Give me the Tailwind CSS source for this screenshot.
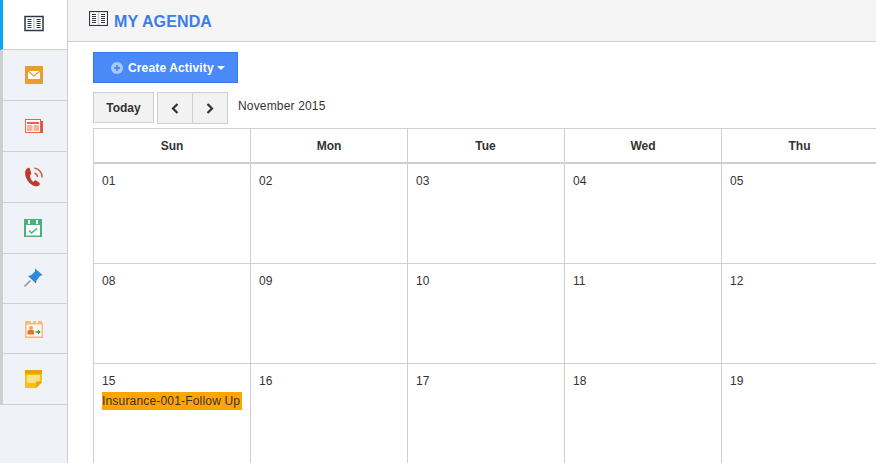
<!DOCTYPE html>
<html><head><meta charset="utf-8"><script src="https://cdn.jsdelivr.net/npm/@tailwindcss/browser@4"></script></head>
<body class="m-0 overflow-hidden bg-white">
<div class="flex w-[876px] h-[463px] overflow-hidden font-['Liberation_Sans',Arial,sans-serif] text-[#333]">
  <aside class="w-[68px] shrink-0 h-full bg-[#eff2f7] border-r border-[#cfcfcf] flex flex-col">
    <div class="h-[50px] bg-white border-l-[3px] border-[#0aa5f5] border-b border-b-[#d0d0d0] flex items-center justify-center pr-[3px] pb-[2px]">
      <svg width="20" height="17" viewBox="0 0 20 17"><rect x="1" y="1.5" width="18" height="14" fill="#fff" stroke="#2f3542" stroke-width="1.5"/><rect x="9" y="2" width="2" height="13" fill="#d5d5d5"/><path d="M3.500 4.500h4M3.500 6.500h4M3.500 8.500h4M3.500 10.500h4M3.500 12.500h4M12.500 4.500h4M12.500 6.500h4M12.500 8.500h4M12.500 10.500h4M12.500 12.500h4" stroke="#2f3542" stroke-width="1"/></svg>
    </div>
    <div class="h-[51px] border-l-[3px] border-l-[#cfcfcf] border-b border-b-[#d0d0d0] flex items-center justify-center pr-[3px]">
      <svg width="18" height="18" viewBox="0 0 18 18"><rect width="18" height="18" fill="#ee9b33"/><path d="M3 5h12v8H3z" fill="#fff"/><path d="M3 5l6 5 6-5" fill="none" stroke="#ee9b33" stroke-width="1.200"/></svg>
    </div>
    <div class="h-[51px] border-l-[3px] border-l-[#cfcfcf] border-b border-b-[#d0d0d0] flex items-center justify-center pr-[3px]">
      <svg width="18" height="14" viewBox="0 0 18 14"><rect x="15" y="2" width="3" height="12" fill="#d9583f"/><rect x=".5" y=".5" width="15" height="13" fill="#fff" stroke="#e9624a"/><rect x="2" y="3" width="12" height="2" fill="#e9624a"/><path d="M2 7h5.500M8.500 7h5.500M2 9h5.500M8.500 9h5.500M2 11h5.500M8.500 11h5.500" stroke="#e9624a" stroke-width="1"/></svg>
    </div>
    <div class="h-[51px] border-l-[3px] border-l-[#cfcfcf] border-b border-b-[#d0d0d0] flex items-center justify-center pr-[3px]">
      <svg width="18" height="20" viewBox="0 0 18 20"><path d="M3 1C.5 2-.5 5 .5 9c1 4 5 9 9 10 2 .500 4 .5 5-1 .5-1 .3-2-.5-2.500l-3-2c-.8-.4-1.500 0-2 .8-.7.800-1.500.5-2.500-1C5.500 11 4.500 9 5.300 8c.7-.5 1.200-1 .9-2L5 2C4.700 1 4 .6 3 1z" fill="#c0392b"/><path d="M9.500 6a4.500 4.500 0 0 1 3 4M9.500 1a9 9 0 0 1 7.500 9.500" fill="none" stroke="#c8604c" stroke-width="1.500"/></svg>
    </div>
    <div class="h-[51px] border-l-[3px] border-l-[#cfcfcf] border-b border-b-[#d0d0d0] flex items-center justify-center pr-[4px]">
      <svg width="18" height="18" viewBox="0 0 18 18"><rect width="18" height="18" fill="#47b27a"/><rect x="2" y="6" width="14" height="10.500" fill="#fff"/><rect x="4" y="1" width="2" height="4" fill="#fff"/><rect x="12" y="1" width="2" height="4" fill="#fff"/><path d="M5 11.500l2.500 2.500 5.500-4.500" fill="none" stroke="#47b27a" stroke-width="1.500"/></svg>
    </div>
    <div class="h-[50px] border-l-[3px] border-l-[#cfcfcf] border-b border-b-[#d0d0d0] flex items-center justify-center pr-[4px] pb-[2px]">
      <svg width="19" height="19" viewBox="0 0 19 19"><path d="M.5 18.500l6-6" stroke="#9a9a9a" stroke-width="1.600"/><path d="M11 .5l7.500 6.500-2.500 1-3.500 4.500-.5 3-8-7.500 3-.8 4-3.700z" fill="#2f8ad6"/></svg>
    </div>
    <div class="h-[50px] border-l-[3px] border-l-[#cfcfcf] border-b border-b-[#d0d0d0] flex items-center justify-center pr-[3px]">
      <svg width="18" height="18" viewBox="0 0 18 18"><path d="M0 1h6v2h2V1h3v2h2V1h4v2h1v15H0z" fill="#f5bd7c"/><rect x="1.500" y="4.500" width="15" height="12" fill="#fdf6ec"/><circle cx="6" cy="8" r="2" fill="#f4a94f"/><path d="M2.500 14.500v-3q0-1.500 1.500-1.500h4q1 0 1 1.500v3z" fill="#e5702a"/><path d="M10.500 12h3" stroke="#2e8b57" stroke-width="1.400"/><path d="M13 9.500l2.500 2.500-2.500 2.500z" fill="#2e8b57"/></svg>
    </div>
    <div class="h-[51px] border-l-[3px] border-l-[#cfcfcf] border-b border-b-[#d0d0d0] flex items-center justify-center pr-[4px]">
      <svg width="17" height="18" viewBox="0 0 17 18"><path d="M0 0h17v12l-6 6H0z" fill="#f5c211"/><rect width="17" height="4" fill="#f39c12"/><path d="M2 6h13M2 8h13M2 10h13M2 12h9" stroke="#fff" stroke-width="1"/><path d="M17 12h-6v6z" fill="#f39c12"/></svg>
    </div>
  </aside>
  <main class="flex-1 min-w-0">
    <header class="h-[42px] bg-[#f5f5f5] border-b border-[#cfcfcf] pl-[21px] pt-[11px] flex items-start gap-[6px]">
      <svg width="19" height="15" viewBox="0 0 19 15"><rect x=".5" y=".5" width="18" height="14" fill="#fff" stroke="#2f3542" stroke-width="1.200"/><rect x="8.500" y="1" width="2" height="13" fill="#d5d5d5"/><path d="M3 3.500h4M3 5.500h4M3 7.500h4M3 9.500h4M3 11.500h4M12 3.500h4M12 5.500h4M12 7.500h4M12 9.500h4M12 11.500h4" stroke="#2f3542" stroke-width="1"/></svg>
      <h1 class="text-[16px] leading-[20px] font-bold text-[#3b7ded] mt-[1px] tracking-[0.12px]">MY AGENDA</h1>
    </header>
    <div class="pl-[25px]">
      <button class="mt-[10px] w-[145px] h-[31px] bg-[#4a8af8] border border-[#3b78e7] text-white text-[12px] font-bold flex items-center pl-[17px] gap-[5px] tracking-[0.14px]">
        <svg width="12" height="12" viewBox="0 0 12 12"><circle cx="6" cy="6" r="6" fill="#a9c8fb"/><path d="M6 3v6M3 6h6" stroke="#4a8af8" stroke-width="1.800"/></svg>
        <span>Create Activity</span>
        <svg width="8" height="4" viewBox="0 0 8 4" class="-ml-[2px]"><path d="M0 0h8L4 4z" fill="#fff"/></svg>
      </button>
      <div class="flex mt-[9px] h-[32px] items-start">
        <button class="w-[61px] h-[31px] bg-[#f2f2f2] border border-[#cfcfcf] text-[12px] font-bold text-[#333]">Today</button>
        <div class="ml-[3px] flex w-[71px] h-[32px] border border-[#cfcfcf] bg-[#f2f2f2]">
          <div class="w-[35px] border-r border-[#cfcfcf] flex items-center justify-center">
            <svg width="8" height="11" viewBox="0 0 8 11"><path d="M6.500 1L2 5.500 6.500 10" fill="none" stroke="#333" stroke-width="2.200"/></svg>
          </div>
          <div class="flex-1 flex items-center justify-center">
            <svg width="8" height="11" viewBox="0 0 8 11"><path d="M1.500 1L6 5.500 1.500 10" fill="none" stroke="#333" stroke-width="2.200"/></svg>
          </div>
        </div>
        <div class="ml-[10px] text-[12px] leading-[14px] mt-[7px] tracking-[0.16px]">November 2015</div>
      </div>
      <div class="mt-[4px] w-[800px] border-l border-t border-[#cfcfcf] grid grid-cols-[157px_157px_157px_157px_157px_157px] grid-rows-[35px_100px_100px_100px] text-[12px]">
        <div class="border-r border-b-2 border-[#cfcfcf] flex items-center justify-center font-bold">Sun</div>
        <div class="border-r border-b-2 border-[#cfcfcf] flex items-center justify-center font-bold">Mon</div>
        <div class="border-r border-b-2 border-[#cfcfcf] flex items-center justify-center font-bold pr-[1px]">Tue</div>
        <div class="border-r border-b-2 border-[#cfcfcf] flex items-center justify-center font-bold">Wed</div>
        <div class="border-r border-b-2 border-[#cfcfcf] flex items-center justify-center font-bold pr-[1px]">Thu</div>
        <div class="border-r border-b-2 border-[#cfcfcf]"></div>
        <div class="border-r border-b border-[#cfcfcf] pl-[8px] pt-[10px] leading-[14px]">01</div>
        <div class="border-r border-b border-[#cfcfcf] pl-[8px] pt-[10px] leading-[14px]">02</div>
        <div class="border-r border-b border-[#cfcfcf] pl-[8px] pt-[10px] leading-[14px]">03</div>
        <div class="border-r border-b border-[#cfcfcf] pl-[8px] pt-[10px] leading-[14px]">04</div>
        <div class="border-r border-b border-[#cfcfcf] pl-[8px] pt-[10px] leading-[14px]">05</div>
        <div class="border-r border-b border-[#cfcfcf]"></div>
        <div class="border-r border-b border-[#cfcfcf] pl-[8px] pt-[10px] leading-[14px]">08</div>
        <div class="border-r border-b border-[#cfcfcf] pl-[8px] pt-[10px] leading-[14px]">09</div>
        <div class="border-r border-b border-[#cfcfcf] pl-[8px] pt-[10px] leading-[14px]">10</div>
        <div class="border-r border-b border-[#cfcfcf] pl-[8px] pt-[10px] leading-[14px]">11</div>
        <div class="border-r border-b border-[#cfcfcf] pl-[8px] pt-[10px] leading-[14px]">12</div>
        <div class="border-r border-b border-[#cfcfcf]"></div>
        <div class="border-r border-[#cfcfcf] pl-[8px] pt-[10px] leading-[14px]">15
          <div class="bg-[#ffa500] w-[140px] h-[18px] leading-[18px] mt-[4px] whitespace-nowrap tracking-[0.18px]">Insurance-001-Follow Up</div>
        </div>
        <div class="border-r border-[#cfcfcf] pl-[8px] pt-[10px] leading-[14px]">16</div>
        <div class="border-r border-[#cfcfcf] pl-[8px] pt-[10px] leading-[14px]">17</div>
        <div class="border-r border-[#cfcfcf] pl-[8px] pt-[10px] leading-[14px]">18</div>
        <div class="border-r border-[#cfcfcf] pl-[8px] pt-[10px] leading-[14px]">19</div>
        <div class="border-r border-[#cfcfcf]"></div>
      </div>
    </div>
  </main>
</div>
</body></html>
